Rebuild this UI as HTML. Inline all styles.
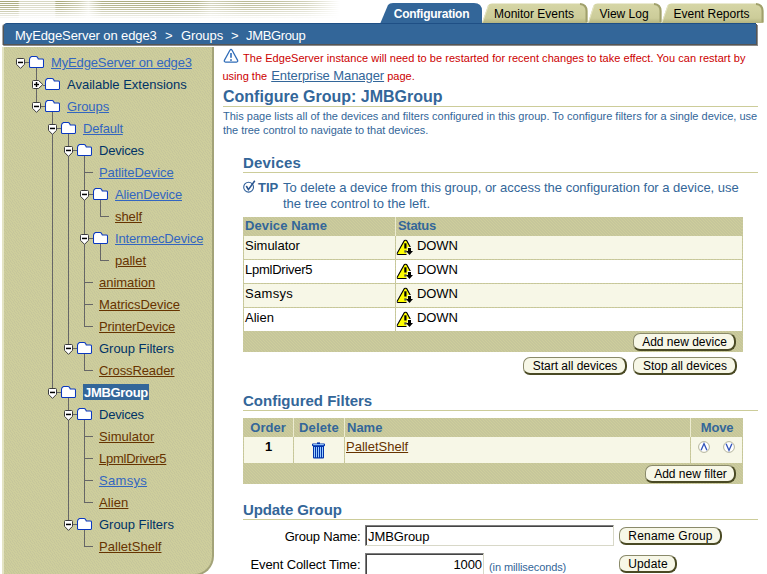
<!DOCTYPE html>
<html><head><meta charset="utf-8"><title>Configure Group: JMBGroup</title>
<style>
html,body{margin:0;padding:0;background:#fff;}
body{width:767px;height:574px;overflow:hidden;position:relative;font-family:"Liberation Sans",sans-serif;font-size:13px;color:#000;}
.a{position:absolute;white-space:nowrap;}
#bar{left:4px;top:23px;width:752px;height:21px;background:#336699;border-radius:3px 0 0 0;box-shadow:-1px 1px 0 #555,-2px 1px 0 #aaa,1px 1px 0 #555,2px 2px 0 #8c8c8c,0 2px 0 #8c8c8c,-1px 2px 0 #aaa;border-top:1px solid #1f4f85;box-sizing:border-box}
#bc{left:15px;top:28px;color:#fff;font-size:13px;line-height:16px;letter-spacing:-0.1px}
#left{left:2px;top:47px;width:212px;height:529px;background:#cccc99;border-radius:0 0 20px 0;border-right:2px solid #a3a378;border-bottom:2px solid #a3a378;background-image:repeating-linear-gradient(55deg,rgba(150,150,170,.11) 0,rgba(150,150,170,.11) .75px,rgba(255,255,255,.03) .75px,rgba(255,255,255,.03) 2.1213px);border-left:2px solid #e4e4c4;box-sizing:border-box}
.bcx{top:28px;color:#fff;font-size:13px;line-height:16px;letter-spacing:-0.1px}
.hd{position:absolute;display:block;width:1px;background:#ecebd0}
.vl{position:absolute;width:1px;background:#666;display:block}
.hl{position:absolute;height:1px;background:#666;display:block}
.ic{position:absolute;display:block}
.tx{position:absolute;white-space:nowrap;font-size:13px;line-height:16px;letter-spacing:-0.1px}
.tv{color:#3366c0;text-decoration:underline}
.tl{color:#663300;text-decoration:underline}
.tt{color:#003366}
.ts{color:#fff;background:#336699;font-weight:bold;padding:1px 1px 0 1px;margin-left:0;letter-spacing:-0.32px !important;margin-top:-1px;height:15px;line-height:15px}
.tab{position:absolute;top:4px;height:20px;font-size:12px;line-height:20px;text-align:center;color:#000}
.h1{color:#336699;font-weight:bold;font-size:16px;line-height:20px}
.h2{color:#336699;font-weight:bold;font-size:15px;line-height:18px}
.rule{position:absolute;height:1px;background:#cccc99}
.sm{font-size:11px;line-height:14px;color:#336699}
.hatch,.th{background-image:repeating-linear-gradient(45deg,rgba(150,150,170,.11) 0,rgba(150,150,170,.11) .75px,rgba(255,255,255,.03) .75px,rgba(255,255,255,.03) 2.1213px);}
.th{position:absolute;background-color:#cccc99;color:#336699;font-weight:bold;font-size:13px;line-height:18px;box-sizing:border-box;padding-left:2px;white-space:nowrap}
.td{position:absolute;font-size:13px;line-height:16px;box-sizing:border-box;padding:2px 0 0 2px;white-space:nowrap}
.band{background:#f7f7e7}
.btn{position:absolute;box-sizing:border-box;height:18px;border:solid;border-width:1px 2px 2px 1px;border-color:#8a8a6a #4a4a24 #4a4a24 #8a8a6a;border-radius:7px 8px 8px 7px;background:#f7f7e7;font-size:12px;line-height:16px;text-align:center;color:#000;white-space:nowrap;padding-left:1px}
.inp{position:absolute;box-sizing:border-box;background:#fff;border:1px solid;border-color:#7e7e7e #d8d8c8 #d8d8c8 #7e7e7e;box-shadow:inset 1px 1px 0 #444;font-size:13px;line-height:16px;padding:3px 2px 0 2px;white-space:nowrap;letter-spacing:-0.1px}
.lbl{position:absolute;font-size:13px;line-height:16px;text-align:right;white-space:nowrap;color:#000}
</style></head><body>
<!-- tabs -->
<svg class="a" style="left:0;top:0" width="767" height="24" viewBox="0 0 767 24">
 <defs>
  <linearGradient id="tg" x1="0" y1="0" x2="0" y2="1"><stop offset="0" stop-color="#d6d6a6"/><stop offset=".75" stop-color="#cccc99"/><stop offset="1" stop-color="#b4b480"/></linearGradient>
  <linearGradient id="bf" x1="0" y1="0" x2="0" y2="1"><stop offset="0" stop-color="#fff" stop-opacity="0"/><stop offset=".4" stop-color="#fff" stop-opacity=".2"/><stop offset=".95" stop-color="#fff" stop-opacity="1"/></linearGradient>
  <linearGradient id="bx" x1="0" y1="0" x2="1" y2="0"><stop offset="0" stop-color="#fff"/><stop offset=".053" stop-color="#fff"/><stop offset=".058" stop-color="#777"/><stop offset=".16" stop-color="#777"/><stop offset=".165" stop-color="#fff"/><stop offset=".18" stop-color="#fff"/><stop offset=".23" stop-color="#aaa"/><stop offset=".26" stop-color="#444"/><stop offset=".3" stop-color="#eee"/><stop offset=".5" stop-color="#fff"/><stop offset=".58" stop-color="#ddd"/><stop offset=".62" stop-color="#888"/><stop offset=".72" stop-color="#ccc"/><stop offset=".8" stop-color="#bbb"/><stop offset=".9" stop-color="#888"/><stop offset="1" stop-color="#000"/></linearGradient>
  <mask id="bm"><rect x="0" y="0" width="340" height="20" fill="url(#bx)"/></mask>
  <pattern id="st" width="4" height="2" patternUnits="userSpaceOnUse"><rect x="0" y="1" width="4" height="1" fill="#a6a676"/></pattern>
 </defs>
 <g mask="url(#bm)"><rect x="0" y="0" width="340" height="20" fill="url(#st)"/><rect x="0" y="0" width="340" height="20" fill="url(#bf)"/></g>
 <path d="M482 23 L488 5.500 Q489 3.500 492 3.500 H580 Q587.500 3.500 587.500 11 V23 Z" fill="url(#tg)"/>
 <path d="M588 23 L593.500 5.500 Q594.500 3.500 597.500 3.500 H654 Q661.500 3.500 661.500 11 V23 Z" fill="url(#tg)"/>
 <path d="M661.500 23 L667.500 5.500 Q668.500 3.500 671.500 3.500 H756 Q763.500 3.500 763.500 11 V23 Z" fill="url(#tg)"/>
 <path d="M586.500 22 V11 Q586.500 4.500 580 4" fill="none" stroke="#a0a06c" stroke-width="2"/>
 <path d="M660.500 22 V11 Q660.500 4.500 654 4" fill="none" stroke="#a0a06c" stroke-width="2"/>
 <path d="M762.500 22 V11 Q762.500 4.500 756 4" fill="none" stroke="#a0a06c" stroke-width="2"/>
 <path d="M482.500 22.500 L488.500 5.500 M588.500 22.500 L594 5.500 M662 22.500 L668 5.500" fill="none" stroke="#e6e6c4" stroke-width="1"/>
 <path d="M380 24 L388 5 Q389.500 3 393 3 H474 Q482 3 482 11 V24 Z" fill="#336699"/>
</svg>
<div class="tab" style="left:393px;width:77px;color:#fff;font-weight:bold;letter-spacing:-0.24px">Configuration</div>
<div class="tab" style="left:493px;width:82px">Monitor Events</div>
<div class="tab" style="left:598px;width:52px">View Log</div>
<div class="tab" style="left:672px;width:79px">Event Reports</div>
<div class="a" id="bar"></div>
<div class="a" id="bc">MyEdgeServer on edge3</div>
<div class="a bcx" style="left:165px">&gt;</div>
<div class="a bcx" style="left:181px">Groups</div>
<div class="a bcx" style="left:231px">&gt;</div>
<div class="a bcx" style="left:246px;letter-spacing:-0.35px">JMBGroup</div>
<div class="a" id="left"></div>
<i class="vl" style="left:36px;top:68px;height:34px"></i>
<i class="vl" style="left:52px;top:112px;height:276px"></i>
<i class="vl" style="left:68px;top:134px;height:210px"></i>
<i class="vl" style="left:84px;top:156px;height:170px"></i>
<i class="vl" style="left:100px;top:200px;height:16px"></i>
<i class="vl" style="left:100px;top:244px;height:16px"></i>
<i class="vl" style="left:84px;top:354px;height:16px"></i>
<i class="vl" style="left:68px;top:398px;height:122px"></i>
<i class="vl" style="left:84px;top:420px;height:82px"></i>
<i class="vl" style="left:84px;top:530px;height:16px"></i>
<svg class="ic" style="left:16px;top:58px" width="9" height="11" viewBox="0 0 9 11"><path d="M0.5 1.5 Q0.5 0.5 1.5 0.5 H7.5 Q8.5 0.5 8.5 1.5 V6.3 L4.5 10.4 L0.5 6.3 Z" fill="#fff" stroke="#3c3c3c" stroke-width="1"/><rect x="2" y="3.700" width="5" height="1.500" fill="#000"/></svg>
<i class="hl" style="left:25px;top:62px;width:4px"></i>
<svg class="ic" style="left:29px;top:56px" width="15" height="12" viewBox="0 0 15 12"><path d="M0.5 10.5 V3.500 Q0.500 1.500 2.500 0.500 H7 Q8.500 0.500 9.300 3 H13.500 Q14.500 3 14.500 4 V10.500 Q14.500 11.500 13.500 11.500 H1.500 Q0.500 11.500 0.500 10.500 Z" fill="#fff" stroke="#0a38c0" stroke-width="1.050"/></svg>
<span class="tx tv" style="left:51px;top:55px;letter-spacing:-0.14px">MyEdgeServer on edge3</span>
<svg class="ic" style="left:32px;top:80px" width="12" height="9" viewBox="0 0 12 9"><path d="M1.5 0.5 H6.5 L10.8 4.5 L6.5 8.500 H1.5 Q0.5 8.500 0.5 7.500 V1.500 Q0.5 0.5 1.500 0.5 Z" fill="#fff" stroke="#3c3c3c" stroke-width="1"/><rect x="2" y="3.800" width="5" height="1.400" fill="#000"/><rect x="3.800" y="2" width="1.400" height="5" fill="#000"/></svg>
<i class="hl" style="left:43px;top:85px;width:2px"></i>
<svg class="ic" style="left:45px;top:78px" width="15" height="12" viewBox="0 0 15 12"><path d="M0.5 10.5 V3.500 Q0.500 1.500 2.500 0.500 H7 Q8.500 0.500 9.300 3 H13.500 Q14.500 3 14.500 4 V10.500 Q14.500 11.500 13.500 11.500 H1.500 Q0.500 11.500 0.500 10.500 Z" fill="#fff" stroke="#0a38c0" stroke-width="1.050"/></svg>
<span class="tx tt" style="left:67px;top:77px;letter-spacing:0px">Available Extensions</span>
<svg class="ic" style="left:32px;top:102px" width="9" height="11" viewBox="0 0 9 11"><path d="M0.5 1.5 Q0.5 0.5 1.5 0.5 H7.5 Q8.5 0.5 8.5 1.5 V6.3 L4.5 10.4 L0.5 6.3 Z" fill="#fff" stroke="#3c3c3c" stroke-width="1"/><rect x="2" y="3.700" width="5" height="1.500" fill="#000"/></svg>
<i class="hl" style="left:41px;top:106px;width:4px"></i>
<svg class="ic" style="left:45px;top:100px" width="15" height="12" viewBox="0 0 15 12"><path d="M0.5 10.5 V3.500 Q0.500 1.500 2.500 0.500 H7 Q8.500 0.500 9.300 3 H13.500 Q14.500 3 14.500 4 V10.500 Q14.500 11.500 13.500 11.500 H1.500 Q0.500 11.500 0.500 10.500 Z" fill="#fff" stroke="#0a38c0" stroke-width="1.050"/></svg>
<span class="tx tv" style="left:67px;top:99px">Groups</span>
<svg class="ic" style="left:48px;top:124px" width="9" height="11" viewBox="0 0 9 11"><path d="M0.5 1.5 Q0.5 0.5 1.5 0.5 H7.5 Q8.5 0.5 8.5 1.5 V6.3 L4.5 10.4 L0.5 6.3 Z" fill="#fff" stroke="#3c3c3c" stroke-width="1"/><rect x="2" y="3.700" width="5" height="1.500" fill="#000"/></svg>
<i class="hl" style="left:57px;top:128px;width:4px"></i>
<svg class="ic" style="left:61px;top:122px" width="15" height="12" viewBox="0 0 15 12"><path d="M0.5 10.5 V3.500 Q0.500 1.500 2.500 0.500 H7 Q8.500 0.500 9.300 3 H13.500 Q14.500 3 14.500 4 V10.500 Q14.500 11.500 13.500 11.500 H1.500 Q0.500 11.500 0.500 10.500 Z" fill="#fff" stroke="#0a38c0" stroke-width="1.050"/></svg>
<span class="tx tv" style="left:83px;top:121px;letter-spacing:-0.2px">Default</span>
<svg class="ic" style="left:64px;top:146px" width="9" height="11" viewBox="0 0 9 11"><path d="M0.5 1.5 Q0.5 0.5 1.5 0.5 H7.5 Q8.5 0.5 8.5 1.5 V6.3 L4.5 10.4 L0.5 6.3 Z" fill="#fff" stroke="#3c3c3c" stroke-width="1"/><rect x="2" y="3.700" width="5" height="1.500" fill="#000"/></svg>
<i class="hl" style="left:73px;top:150px;width:4px"></i>
<svg class="ic" style="left:77px;top:144px" width="15" height="12" viewBox="0 0 15 12"><path d="M0.5 10.5 V3.500 Q0.500 1.500 2.500 0.500 H7 Q8.500 0.500 9.300 3 H13.500 Q14.500 3 14.500 4 V10.500 Q14.500 11.500 13.500 11.500 H1.500 Q0.500 11.500 0.500 10.500 Z" fill="#fff" stroke="#0a38c0" stroke-width="1.050"/></svg>
<span class="tx tt" style="left:99px;top:143px;letter-spacing:-0.2px">Devices</span>
<i class="hl" style="left:84px;top:172px;width:9px"></i>
<span class="tx tv" style="left:99px;top:165px">PatliteDevice</span>
<svg class="ic" style="left:80px;top:190px" width="9" height="11" viewBox="0 0 9 11"><path d="M0.5 1.5 Q0.5 0.5 1.5 0.5 H7.5 Q8.5 0.5 8.5 1.5 V6.3 L4.5 10.4 L0.5 6.3 Z" fill="#fff" stroke="#3c3c3c" stroke-width="1"/><rect x="2" y="3.700" width="5" height="1.500" fill="#000"/></svg>
<i class="hl" style="left:89px;top:194px;width:4px"></i>
<svg class="ic" style="left:93px;top:188px" width="15" height="12" viewBox="0 0 15 12"><path d="M0.5 10.5 V3.500 Q0.500 1.500 2.500 0.500 H7 Q8.500 0.500 9.300 3 H13.500 Q14.500 3 14.500 4 V10.500 Q14.500 11.500 13.500 11.500 H1.500 Q0.500 11.500 0.500 10.500 Z" fill="#fff" stroke="#0a38c0" stroke-width="1.050"/></svg>
<span class="tx tv" style="left:115px;top:187px;letter-spacing:-0.15px">AlienDevice</span>
<i class="hl" style="left:100px;top:216px;width:9px"></i>
<span class="tx tl" style="left:115px;top:209px">shelf</span>
<svg class="ic" style="left:80px;top:234px" width="9" height="11" viewBox="0 0 9 11"><path d="M0.5 1.5 Q0.5 0.5 1.5 0.5 H7.5 Q8.5 0.5 8.5 1.5 V6.3 L4.5 10.4 L0.5 6.3 Z" fill="#fff" stroke="#3c3c3c" stroke-width="1"/><rect x="2" y="3.700" width="5" height="1.500" fill="#000"/></svg>
<i class="hl" style="left:89px;top:238px;width:4px"></i>
<svg class="ic" style="left:93px;top:232px" width="15" height="12" viewBox="0 0 15 12"><path d="M0.5 10.5 V3.500 Q0.500 1.500 2.500 0.500 H7 Q8.500 0.500 9.300 3 H13.500 Q14.500 3 14.500 4 V10.500 Q14.500 11.500 13.500 11.500 H1.500 Q0.500 11.500 0.500 10.500 Z" fill="#fff" stroke="#0a38c0" stroke-width="1.050"/></svg>
<span class="tx tv" style="left:115px;top:231px;letter-spacing:-0.15px">IntermecDevice</span>
<i class="hl" style="left:100px;top:260px;width:9px"></i>
<span class="tx tl" style="left:115px;top:253px;letter-spacing:0px">pallet</span>
<i class="hl" style="left:84px;top:282px;width:9px"></i>
<span class="tx tl" style="left:99px;top:275px;letter-spacing:-0.02px">animation</span>
<i class="hl" style="left:84px;top:304px;width:9px"></i>
<span class="tx tl" style="left:99px;top:297px;letter-spacing:-0.06px">MatricsDevice</span>
<i class="hl" style="left:84px;top:326px;width:9px"></i>
<span class="tx tl" style="left:99px;top:319px;letter-spacing:-0.15px">PrinterDevice</span>
<svg class="ic" style="left:64px;top:344px" width="9" height="11" viewBox="0 0 9 11"><path d="M0.5 1.5 Q0.5 0.5 1.5 0.5 H7.5 Q8.5 0.5 8.5 1.5 V6.3 L4.5 10.4 L0.5 6.3 Z" fill="#fff" stroke="#3c3c3c" stroke-width="1"/><rect x="2" y="3.700" width="5" height="1.500" fill="#000"/></svg>
<i class="hl" style="left:73px;top:348px;width:4px"></i>
<svg class="ic" style="left:77px;top:342px" width="15" height="12" viewBox="0 0 15 12"><path d="M0.5 10.5 V3.500 Q0.500 1.500 2.500 0.500 H7 Q8.500 0.500 9.300 3 H13.500 Q14.500 3 14.500 4 V10.500 Q14.500 11.500 13.500 11.500 H1.500 Q0.500 11.500 0.500 10.500 Z" fill="#fff" stroke="#0a38c0" stroke-width="1.050"/></svg>
<span class="tx tt" style="left:99px;top:341px;letter-spacing:-0.02px">Group Filters</span>
<i class="hl" style="left:84px;top:370px;width:9px"></i>
<span class="tx tl" style="left:99px;top:363px">CrossReader</span>
<svg class="ic" style="left:48px;top:388px" width="9" height="11" viewBox="0 0 9 11"><path d="M0.5 1.5 Q0.5 0.5 1.5 0.5 H7.5 Q8.5 0.5 8.5 1.5 V6.3 L4.5 10.4 L0.5 6.3 Z" fill="#fff" stroke="#3c3c3c" stroke-width="1"/><rect x="2" y="3.700" width="5" height="1.500" fill="#000"/></svg>
<i class="hl" style="left:57px;top:392px;width:4px"></i>
<svg class="ic" style="left:61px;top:386px" width="15" height="12" viewBox="0 0 15 12"><path d="M0.5 10.5 V3.500 Q0.500 1.500 2.500 0.500 H7 Q8.500 0.500 9.300 3 H13.500 Q14.500 3 14.500 4 V10.500 Q14.500 11.500 13.500 11.500 H1.500 Q0.500 11.500 0.500 10.500 Z" fill="#fff" stroke="#0a38c0" stroke-width="1.050"/></svg>
<span class="tx ts" style="left:83px;top:385px">JMBGroup</span>
<svg class="ic" style="left:64px;top:410px" width="9" height="11" viewBox="0 0 9 11"><path d="M0.5 1.5 Q0.5 0.5 1.5 0.5 H7.5 Q8.5 0.5 8.5 1.5 V6.3 L4.5 10.4 L0.5 6.3 Z" fill="#fff" stroke="#3c3c3c" stroke-width="1"/><rect x="2" y="3.700" width="5" height="1.500" fill="#000"/></svg>
<i class="hl" style="left:73px;top:414px;width:4px"></i>
<svg class="ic" style="left:77px;top:408px" width="15" height="12" viewBox="0 0 15 12"><path d="M0.5 10.5 V3.500 Q0.500 1.500 2.500 0.500 H7 Q8.500 0.500 9.300 3 H13.500 Q14.500 3 14.500 4 V10.500 Q14.500 11.500 13.500 11.500 H1.500 Q0.500 11.500 0.500 10.500 Z" fill="#fff" stroke="#0a38c0" stroke-width="1.050"/></svg>
<span class="tx tt" style="left:99px;top:407px;letter-spacing:-0.2px">Devices</span>
<i class="hl" style="left:84px;top:436px;width:9px"></i>
<span class="tx tl" style="left:99px;top:429px;letter-spacing:0.04px">Simulator</span>
<i class="hl" style="left:84px;top:458px;width:9px"></i>
<span class="tx tl" style="left:99px;top:451px;letter-spacing:-0.25px">LpmlDriver5</span>
<i class="hl" style="left:84px;top:480px;width:9px"></i>
<span class="tx tv" style="left:99px;top:473px;letter-spacing:0.3px">Samsys</span>
<i class="hl" style="left:84px;top:502px;width:9px"></i>
<span class="tx tl" style="left:99px;top:495px;letter-spacing:0.1px">Alien</span>
<svg class="ic" style="left:64px;top:520px" width="9" height="11" viewBox="0 0 9 11"><path d="M0.5 1.5 Q0.5 0.5 1.5 0.5 H7.5 Q8.5 0.5 8.5 1.5 V6.3 L4.5 10.4 L0.5 6.3 Z" fill="#fff" stroke="#3c3c3c" stroke-width="1"/><rect x="2" y="3.700" width="5" height="1.500" fill="#000"/></svg>
<i class="hl" style="left:73px;top:524px;width:4px"></i>
<svg class="ic" style="left:77px;top:518px" width="15" height="12" viewBox="0 0 15 12"><path d="M0.5 10.5 V3.500 Q0.500 1.500 2.500 0.500 H7 Q8.500 0.500 9.300 3 H13.500 Q14.500 3 14.500 4 V10.500 Q14.500 11.500 13.500 11.500 H1.500 Q0.500 11.500 0.500 10.500 Z" fill="#fff" stroke="#0a38c0" stroke-width="1.050"/></svg>
<span class="tx tt" style="left:99px;top:517px;letter-spacing:-0.02px">Group Filters</span>
<i class="hl" style="left:84px;top:546px;width:9px"></i>
<span class="tx tl" style="left:99px;top:539px;letter-spacing:0.03px">PalletShelf</span>

<!-- warning -->
<svg class="a" style="left:223px;top:48px" width="16" height="16" viewBox="0 0 16 16"><path d="M6.900 2.300 Q8 .5 9.100 2.300 L14.500 12.100 Q15.300 14 13.500 14 H2.500 Q.7 14 1.500 12.100 Z" fill="#fff" stroke="#2f6cb8" stroke-width="1.250" stroke-linejoin="round"/><rect x="7.200" y="5" width="1.600" height="4.800" fill="#2f6cb8"/><rect x="7.200" y="11.200" width="1.600" height="1.700" fill="#2f6cb8"/></svg>
<div class="a sm" style="left:243px;top:51px;color:#cc0000;letter-spacing:.042px">The EdgeServer instance will need to be restarted for recent changes to take effect. You can restart by</div>
<div class="a sm" style="left:222.500px;top:69px;color:#cc0000">using the <span style="font-size:13px;color:#336699;text-decoration:underline;margin:0 0 0 1px;letter-spacing:-0.07px">Enterprise Manager</span> page.</div>
<div class="a h1" style="left:223px;top:87px">Configure Group: JMBGroup</div>
<div class="rule" style="left:223px;top:106px;width:535px"></div>
<div class="a sm" style="left:223px;top:109px">This page lists all of the devices and filters configured in this group. To configure filters for a single device, use</div>
<div class="a sm" style="left:223px;top:123px;letter-spacing:-0.045px">the tree control to navigate to that devices.</div>

<div class="a h2" style="left:243px;top:154px;letter-spacing:.2px">Devices</div>
<div class="rule" style="left:243px;top:172px;width:515px"></div>
<svg class="a" style="left:243px;top:180px" width="13" height="13" viewBox="0 0 13 13"><circle cx="5.600" cy="7.200" r="4.900" fill="#fff" stroke="#2f5f99" stroke-width="1.100"/><path d="M3.300 6 L5.400 9.600 L11.800 .8" fill="none" stroke="#2a5590" stroke-width="1.600"/></svg>
<div class="a" style="left:258px;top:180px;font-size:13px;line-height:16px;font-weight:bold;color:#336699">TIP</div>
<div class="a" style="left:283px;top:180px;font-size:13px;line-height:16px;color:#336699;letter-spacing:-0.012px">To delete a device from this group, or access the configuration for a device, use<br>the tree control to the left.</div>

<!-- table 1 -->
<div class="a hatch" style="left:243px;top:217px;width:500px;height:135px;background-color:#cccc99"></div>
<div class="th" style="left:243px;top:217px;width:151px;height:19px;letter-spacing:.1px">Device Name</div>
<div class="th" style="left:396px;top:217px;width:346px;height:19px;letter-spacing:-0.3px">Status</div>
<div class="td" style="left:244px;top:236px;width:151px;height:23px;background:#f7f7e7;padding-left:1px">Simulator</div>
<div class="td" style="left:396px;top:236px;width:346px;height:23px;background:#f7f7e7"><span style="margin-left:19px;letter-spacing:-0.12px">DOWN</span></div>
<svg class="a" style="left:396px;top:239px" width="19" height="18" viewBox="0 0 19 18"><path d="M8.300 1.700 Q9.500 .5 10.700 1.700 L17.500 14 Q18 15.500 16.500 15.500 H2 Q.6 15.500 1.300 14 Z" fill="#ffff00" stroke="#000" stroke-width="1.100" clip-path="polygon(0 0,19px 0,19px 7.500px,14px 7.500px,11px 7.500px,11px 11px,10px 11px,10px 18px,0 18px)"/><rect x="8.300" y="4.300" width="2.200" height="5.200" fill="#000"/><rect x="8.300" y="11.300" width="2.200" height="2.300" fill="#555"/><path d="M12 9 H15 V12 H17 L13.500 16 L10 12 H12 Z" fill="#000"/></svg>
<div class="td" style="left:244px;top:260px;width:151px;height:23px;background:#fff;padding-left:1px;letter-spacing:-0.25px">LpmlDriver5</div>
<div class="td" style="left:396px;top:260px;width:346px;height:23px;background:#fff"><span style="margin-left:19px;letter-spacing:-0.12px">DOWN</span></div>
<svg class="a" style="left:396px;top:263px" width="19" height="18" viewBox="0 0 19 18"><path d="M8.300 1.700 Q9.500 .5 10.700 1.700 L17.500 14 Q18 15.500 16.500 15.500 H2 Q.6 15.500 1.300 14 Z" fill="#ffff00" stroke="#000" stroke-width="1.100" clip-path="polygon(0 0,19px 0,19px 7.500px,14px 7.500px,11px 7.500px,11px 11px,10px 11px,10px 18px,0 18px)"/><rect x="8.300" y="4.300" width="2.200" height="5.200" fill="#000"/><rect x="8.300" y="11.300" width="2.200" height="2.300" fill="#555"/><path d="M12 9 H15 V12 H17 L13.500 16 L10 12 H12 Z" fill="#000"/></svg>
<div class="td" style="left:244px;top:284px;width:151px;height:23px;background:#f7f7e7;padding-left:1px;letter-spacing:.3px">Samsys</div>
<div class="td" style="left:396px;top:284px;width:346px;height:23px;background:#f7f7e7"><span style="margin-left:19px;letter-spacing:-0.12px">DOWN</span></div>
<svg class="a" style="left:396px;top:287px" width="19" height="18" viewBox="0 0 19 18"><path d="M8.300 1.700 Q9.500 .5 10.700 1.700 L17.500 14 Q18 15.500 16.500 15.500 H2 Q.6 15.500 1.300 14 Z" fill="#ffff00" stroke="#000" stroke-width="1.100" clip-path="polygon(0 0,19px 0,19px 7.500px,14px 7.500px,11px 7.500px,11px 11px,10px 11px,10px 18px,0 18px)"/><rect x="8.300" y="4.300" width="2.200" height="5.200" fill="#000"/><rect x="8.300" y="11.300" width="2.200" height="2.300" fill="#555"/><path d="M12 9 H15 V12 H17 L13.500 16 L10 12 H12 Z" fill="#000"/></svg>
<div class="td" style="left:244px;top:308px;width:151px;height:23px;background:#fff;padding-left:1px">Alien</div>
<div class="td" style="left:396px;top:308px;width:346px;height:23px;background:#fff"><span style="margin-left:19px;letter-spacing:-0.12px">DOWN</span></div>
<svg class="a" style="left:396px;top:311px" width="19" height="18" viewBox="0 0 19 18"><path d="M8.300 1.700 Q9.500 .5 10.700 1.700 L17.500 14 Q18 15.500 16.500 15.500 H2 Q.6 15.500 1.300 14 Z" fill="#ffff00" stroke="#000" stroke-width="1.100" clip-path="polygon(0 0,19px 0,19px 7.500px,14px 7.500px,11px 7.500px,11px 11px,10px 11px,10px 18px,0 18px)"/><rect x="8.300" y="4.300" width="2.200" height="5.200" fill="#000"/><rect x="8.300" y="11.300" width="2.200" height="2.300" fill="#555"/><path d="M12 9 H15 V12 H17 L13.500 16 L10 12 H12 Z" fill="#000"/></svg>
<div class="btn" style="left:633px;top:333px;width:103px">Add new device</div>
<div class="btn" style="left:523px;top:357px;width:104px">Start all devices</div>
<div class="btn" style="left:633px;top:357px;width:104px">Stop all devices</div>

<div class="a h2" style="left:243px;top:392px">Configured Filters</div>
<div class="rule" style="left:243px;top:410px;width:515px"></div>
<!-- table 2 -->
<div class="a hatch" style="left:243px;top:418px;width:500px;height:66px;background-color:#cccc99"></div>
<div class="th" style="left:243px;top:418px;width:50px;height:19px;line-height:19px;text-align:center;padding:0">Order</div>
<div class="th" style="left:294px;top:418px;width:50px;height:19px;line-height:19px;text-align:center;padding:0;letter-spacing:.15px">Delete</div>
<div class="th" style="left:345px;top:418px;width:345px;height:19px;line-height:19px">Name</div>
<div class="th" style="left:691px;top:418px;width:52px;height:19px;line-height:19px;text-align:center;padding:0;letter-spacing:-0.2px">Move</div>
<i class="hd" style="left:293px;top:418px;height:19px"></i><i class="hd" style="left:344px;top:418px;height:19px"></i><i class="hd" style="left:690px;top:418px;height:19px"></i>
<i class="hd" style="left:395px;top:217px;height:19px"></i>
<div class="td band" style="left:244px;top:437px;width:49px;height:26px;text-align:center;font-weight:bold;padding-left:0;padding-top:2px">1</div>
<div class="td band" style="left:294px;top:437px;width:50px;height:26px"></div>
<div class="td band" style="left:345px;top:437px;width:345px;height:26px;padding-left:1px;padding-top:2px"><span style="color:#663300;text-decoration:underline">PalletShelf</span></div>
<div class="td band" style="left:691px;top:437px;width:51px;height:26px"></div>
<svg class="a" style="left:312px;top:441.500px" width="13" height="17" viewBox="0 0 13 17"><rect x="5" y=".4" width="3" height="1.600" fill="#0033aa"/><rect x="0" y="1.500" width="13" height="2.700" rx="1" fill="#0033aa"/><rect x="1.200" y="2.100" width="10.600" height="1.100" fill="#99ccff"/><path d="M1 4 H12 V15.500 Q12 16.500 11 16.500 H2 Q1 16.500 1 15.500 Z" fill="#0033aa"/><path d="M2.500 5 V15.300 M4.500 5 V15.300 M6.500 5 V15.300 M8.500 5 V15.300 M10.500 5 V15.300" stroke="#99ccff" stroke-width="1"/></svg>
<svg class="a" style="left:698px;top:440.500px" width="12" height="12" viewBox="0 0 12 12"><circle cx="6" cy="6" r="5.400" fill="#fff" stroke="#b4b49c" stroke-width="1"/><path d="M3.100 9.300 L6 2.600 L8.900 9.300" fill="none" stroke="#3355bb" stroke-width="1.350"/></svg>
<svg class="a" style="left:723px;top:440.500px" width="12" height="12" viewBox="0 0 12 12"><circle cx="6" cy="6" r="5.400" fill="#fff" stroke="#b4b49c" stroke-width="1"/><path d="M3.100 2.700 L6 9.400 L8.900 2.700" fill="none" stroke="#3355bb" stroke-width="1.350"/></svg>
<div class="btn" style="left:645px;top:465px;width:91px">Add new filter</div>

<div class="a h2" style="left:243px;top:501px;letter-spacing:-0.1px">Update Group</div>
<div class="rule" style="left:243px;top:519px;width:515px"></div>
<div class="lbl" style="left:243px;width:117.500px;top:529px;letter-spacing:-0.2px">Group Name:</div>
<div class="inp" style="left:365px;top:525px;width:249px;height:21px">JMBGroup</div>
<div class="btn" style="left:619px;top:527px;width:103px;letter-spacing:.2px">Rename Group</div>
<div class="lbl" style="left:243px;width:117.500px;top:557px;letter-spacing:-0.1px">Event Collect Time:</div>
<div class="inp" style="left:365px;top:553px;width:119px;height:22px;text-align:right;padding-top:3px;padding-right:1px">1000</div>
<div class="a sm" style="left:489px;top:560px;letter-spacing:-0.1px">(in milliseconds)</div>
<div class="btn" style="left:619px;top:555px;width:58px;letter-spacing:.15px">Update</div>
</body></html>
